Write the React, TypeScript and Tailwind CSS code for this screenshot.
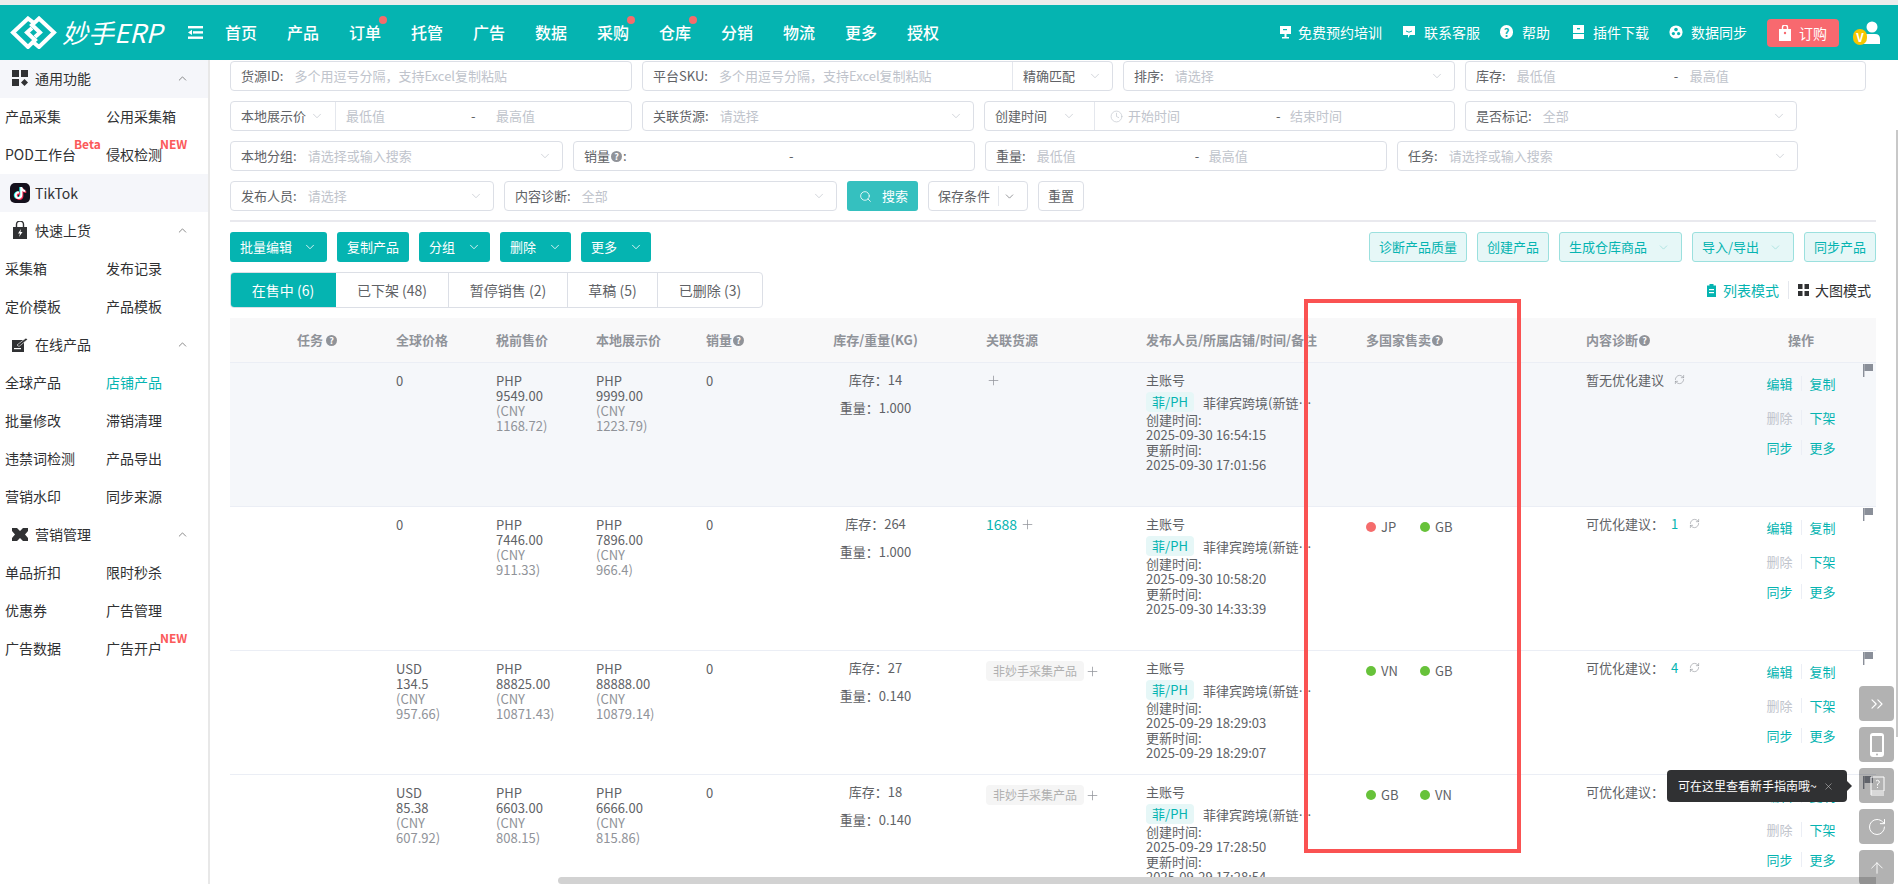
import React from "react";
import { ChevronDown, ChevronUp, Search, Clock, Plus, RefreshCw, X, ChevronsRight, RotateCw, ArrowUp } from "lucide-react";
import { FaTiktok } from "react-icons/fa6";

const GRID = "grid grid-cols-[156px_100px_100px_110px_99px_161px_180px_220px_220px_170px_110px_20px]";
const HINT = "多个用逗号分隔\uFF0C支持Excel复制粘贴";

function Help() {
  return <span className="inline-flex w-[11px] h-[11px] rounded-full bg-[#909399] text-white text-[9px] leading-none items-center justify-center font-bold shrink-0">?</span>;
}

function Logo() {
  return (
    <svg width="47" height="33" viewBox="0 0 47 33" fill="none" stroke="white" strokeWidth="4" className="shrink-0">
      <path d="M24 7 L18 2.5 L3 16.5 L18 31 L25 24 L17 16.5 L22 12" />
      <path d="M23 26 L29 31 L44 16.5 L29 2.5 L22 9 L30 16.5 L25 21" />
    </svg>
  );
}

function MenuIcon() {
  return (
    <svg width="15" height="13" viewBox="0 0 15 13" fill="white" className="shrink-0">
      <rect x="0" y="0" width="15" height="2.4" />
      <rect x="5" y="5.2" width="10" height="2.4" />
      <rect x="0" y="10.5" width="15" height="2.4" />
      <path d="M0 6.4 L4 3.8 V9 Z" />
    </svg>
  );
}

function NavItem({ label, dot }: { label: string; dot?: boolean }) {
  return (
    <span className="relative w-[32px] text-[16px] leading-[22px] font-medium text-white whitespace-nowrap">
      {label}
      {dot && <span className="absolute right-[-6px] top-[-5px] w-[8px] h-[8px] rounded-full bg-[#f56c6c]" />}
    </span>
  );
}

function HeadIcon({ kind }: { kind: string }) {
  if (kind === "screen")
    return <svg width="13" height="14" viewBox="0 0 13 14" fill="white" className="shrink-0"><path d="M1 1h11v8H1z" /><path d="M5.5 9h2v3h-2zM3 12h7v1.4H3z" /><rect x="4" y="4" width="4" height="1.2" fill="#05b4b1" /></svg>;
  if (kind === "chat")
    return <svg width="14" height="14" viewBox="0 0 14 14" fill="white" className="shrink-0"><path d="M1 1h12v9H8l-2 3v-3H1z" /><path d="M4 6q3 2.4 6 0" stroke="#05b4b1" fill="none" /></svg>;
  if (kind === "help")
    return <span className="w-[13px] h-[14px] rounded-full bg-white text-[#05b4b1] text-[11px] leading-[14px] font-bold text-center shrink-0">?</span>;
  if (kind === "plug")
    return <svg width="13" height="14" viewBox="0 0 13 14" fill="white" className="shrink-0"><rect x="1" y="0" width="11" height="14" /><rect x="1" y="8" width="11" height="1" fill="#05b4b1" /><rect x="5" y="3" width="3" height="1.4" fill="#05b4b1" /></svg>;
  return <svg width="14" height="14" viewBox="0 0 14 14" fill="white" className="shrink-0"><circle cx="7" cy="7" r="6.6" /><circle cx="7" cy="4.5" r="1.8" fill="#05b4b1" /><circle cx="4.4" cy="8.6" r="1.6" fill="#05b4b1" /><circle cx="9.6" cy="8.6" r="1.6" fill="#05b4b1" /></svg>;
}

function Header() {
  const R = "flex items-center pb-[2px]";
  return (
    <header className="h-[55px] shrink-0 bg-[#05b4b1] flex items-center text-white">
      <div className="flex items-center w-[188px] pl-[10px] gap-[5px] pb-[1px]">
        <Logo />
        <span className="text-[26px] leading-[30px] italic whitespace-nowrap">妙手ERP</span>
      </div>
      <MenuIcon />
      <nav className="flex items-center gap-[30px] ml-[22px] pb-[2px]">
        <NavItem label="首页" />
        <NavItem label="产品" />
        <NavItem label="订单" dot />
        <NavItem label="托管" />
        <NavItem label="广告" />
        <NavItem label="数据" />
        <NavItem label="采购" dot />
        <NavItem label="仓库" dot />
        <NavItem label="分销" />
        <NavItem label="物流" />
        <NavItem label="更多" />
        <NavItem label="授权" />
      </nav>
      <div className="ml-auto flex items-center text-[14px] leading-[20px] pr-[17px]">
        <span className={R + " gap-[6px] mr-[20px]"}><HeadIcon kind="screen" />免费预约培训</span>
        <span className={R + " gap-[8px] mr-[20px]"}><HeadIcon kind="chat" />联系客服</span>
        <span className={R + " gap-[9px] mr-[22px]"}><HeadIcon kind="help" />帮助</span>
        <span className={R + " gap-[8px] mr-[20px]"}><HeadIcon kind="plug" />插件下载</span>
        <span className={R + " gap-[8px] mr-[20px]"}><HeadIcon kind="sync" />数据同步</span>
        <span className="w-[72px] h-[28px] bg-[#f8696f] rounded-[4px] flex items-center justify-center gap-[8px] mr-[14px]">
          <svg width="12" height="16" viewBox="0 0 12 16" fill="white"><path d="M0 4h12v12H0z" /><path d="M3.5 4V2.5a2.5 2.5 0 0 1 5 0V4" stroke="white" fill="none" strokeWidth="1.4" /><circle cx="6" cy="8" r="1.2" fill="#f8696f" /></svg>
          订购
        </span>
        <span className="relative w-[28px] h-[24px] shrink-0">
          <svg width="20" height="24" viewBox="0 0 20 24" fill="white" className="absolute right-0 top-0"><circle cx="11" cy="6" r="5.5" /><path d="M2 23v-5q0-5 5-5h7q5 0 5 5v5z" /></svg>
          <span className="absolute left-0 top-[8px] w-[14px] h-[16px] rounded-full bg-[#f7c600] text-white text-[12px] font-bold leading-[16px] text-center">V</span>
        </span>
      </div>
    </header>
  );
}

function SecIcon({ kind }: { kind: string }) {
  if (kind === "grid")
    return <svg width="16" height="16" viewBox="0 0 16 16" fill="#303133" className="shrink-0"><rect width="7" height="7" /><rect x="9" width="7" height="7" /><rect y="9" width="7" height="7" /><path d="M12.5 9 L16 12.5 L12.5 16 L9 12.5Z" /></svg>;
  if (kind === "bag")
    return <svg width="14" height="18" viewBox="0 0 14 18" className="shrink-0"><path d="M0 6h14v12H0z" fill="#303133" /><path d="M3.5 6V3.5a3.5 3.5 0 0 1 7 0V6" stroke="#303133" fill="none" strokeWidth="1.4" /><path d="M8 8 L5 12.5 H7 L6 16 L9.5 11 H7.5Z" fill="white" /></svg>;
  if (kind === "edit")
    return <svg width="16" height="15" viewBox="0 0 16 15" className="shrink-0"><path d="M0 3h12v12H0z" fill="#303133" /><path d="M5 8 L14 1 L15.5 2.5 L7 9.5Z" fill="#303133" stroke="white" strokeWidth=".6" /><rect x="2" y="11" width="7" height="1.2" fill="white" /></svg>;
  return <svg width="16" height="13" viewBox="0 0 16 13" fill="#303133" className="shrink-0"><path d="M0 0h5l3 3 3-3h5v3l-3 3.5 3 3.5v3h-5l-3-3-3 3H0v-3l3-3.5L0 3z" /></svg>;
}

function SecHead({ kind, label, active }: { kind: string; label: string; active?: boolean }) {
  return (
    <div className={active ? "h-[38px] flex items-center bg-[#f5f6fa] pb-[2px]" : "h-[38px] flex items-center pb-[2px]"}>
      <span className="w-[35px] flex justify-center pl-[5px]"><SecIcon kind={kind} /></span>
      <span className="text-[14px] text-[#303133]">{label}</span>
      <ChevronUp size={13} strokeWidth={1.4} className="ml-auto mr-[19px] text-[#666]" />
    </div>
  );
}

function SideGrid({ items }: { items: [React.ReactNode, React.ReactNode][] }) {
  return (
    <>
      {items.map((r, i) => (
        <div key={i} className="h-[38px] pb-[2px] grid grid-cols-[106px_1fr] items-center text-[14px] text-[#303133]">
          <span className="pl-[5px] whitespace-nowrap">{r[0]}</span>
          <span className="whitespace-nowrap">{r[1]}</span>
        </div>
      ))}
    </>
  );
}

function Badge({ text }: { text: string }) {
  return <span className="absolute left-full top-[-6px] ml-[-2px] text-[12px] leading-[12px] font-bold text-[#fb5a5a] whitespace-nowrap">{text}</span>;
}

function Sidebar() {
  return (
    <aside className="w-[210px] shrink-0 border-r-2 border-[#e8e8e8] bg-white h-full overflow-hidden">
      <SecHead kind="grid" label="通用功能" active />
      <SideGrid items={[
        ["产品采集", "公用采集箱"],
        [<span className="relative">POD工作台<Badge text="Beta" /></span>, <span className="relative">侵权检测<Badge text="NEW" /></span>],
      ]} />
      <div className="h-[38px] flex items-center bg-[#f5f6fa] text-[14px] text-[#303133]">
        <span className="relative w-[20px] h-[20px] ml-[10px] mr-[5px] rounded-[5px] bg-[#14101c] flex items-center justify-center shrink-0">
          <FaTiktok size={12} className="absolute text-[#25f4ee] left-[3px] top-[4px]" />
          <FaTiktok size={12} className="absolute text-[#fe2c55] left-[5px] top-[5px]" />
          <FaTiktok size={12} className="absolute text-white left-[4px] top-[4px]" />
        </span>
        TikTok
      </div>
      <SecHead kind="bag" label="快速上货" />
      <SideGrid items={[["采集箱", "发布记录"], ["定价模板", "产品模板"]]} />
      <SecHead kind="edit" label="在线产品" />
      <SideGrid items={[
        ["全球产品", <span className="text-[#05b4b1]">店铺产品</span>],
        ["批量修改", "滞销清理"],
        ["违禁词检测", "产品导出"],
        ["营销水印", "同步来源"],
      ]} />
      <SecHead kind="ticket" label="营销管理" />
      <SideGrid items={[
        ["单品折扣", "限时秒杀"],
        ["优惠券", "广告管理"],
        ["广告数据", <span className="relative">广告开户<Badge text="NEW" /></span>],
      ]} />
    </aside>
  );
}

const BOX = "h-[30px] shrink-0 border border-[#dcdfe6] rounded-[4px] bg-white flex items-center text-[13px] text-[#606266] whitespace-nowrap";
const PH = "text-[#c0c4cc]";
const CHEV = "ml-auto mr-[10px] text-[#c0c4cc] shrink-0";

function Filters() {
  return (
    <div className="pt-[1px] flex flex-col gap-[10px]">
      <div className="flex gap-[10px]">
        <div className={BOX + " w-[402px] pl-[10px]"}>货源ID:<span className={PH + " ml-[11px]"}>{HINT}</span></div>
        <div className={BOX + " w-[471px] pl-[10px]"}>
          平台SKU:<span className={PH + " ml-[11px]"}>{HINT}</span>
          <span className="ml-auto h-full w-[100px] border-l border-[#e4e7ed] flex items-center pl-[10px]">精确匹配<ChevronDown size={14} strokeWidth={1.2} className={CHEV} /></span>
        </div>
        <div className={BOX + " w-[332px] pl-[10px]"}>排序:<span className={PH + " ml-[11px]"}>请选择</span><ChevronDown size={14} strokeWidth={1.2} className={CHEV} /></div>
        <div className={BOX + " w-[401px] pl-[10px]"}>库存:<span className={PH + " ml-[11px] w-[157px]"}>最低值</span><span className="w-[16px]">-</span><span className={PH}>最高值</span></div>
      </div>
      <div className="flex gap-[10px]">
        <div className={BOX + " w-[402px]"}>
          <span className="h-full w-[105px] border-r border-[#e4e7ed] flex items-center pl-[10px]">本地展示价<ChevronDown size={14} strokeWidth={1.2} className="ml-[4px] text-[#c0c4cc]" /></span>
          <span className={PH + " ml-[10px] w-[125px]"}>最低值</span><span className="w-[25px]">-</span><span className={PH}>最高值</span>
        </div>
        <div className={BOX + " w-[332px] pl-[10px]"}>关联货源:<span className={PH + " ml-[11px]"}>请选择</span><ChevronDown size={14} strokeWidth={1.2} className={CHEV} /></div>
        <div className={BOX + " w-[471px]"}>
          <span className="h-full w-[110px] border-r border-[#e4e7ed] flex items-center pl-[10px]">创建时间<ChevronDown size={14} strokeWidth={1.2} className="ml-[15px] text-[#c0c4cc]" /></span>
          <Clock size={13} strokeWidth={1.2} className="ml-[15px] mr-[5px] text-[#c0c4cc] shrink-0" />
          <span className={PH + " w-[148px]"}>开始时间</span><span className="w-[14px]">-</span><span className={PH}>结束时间</span>
        </div>
        <div className={BOX + " w-[332px] pl-[10px]"}>是否标记:<span className={PH + " ml-[11px]"}>全部</span><ChevronDown size={14} strokeWidth={1.2} className={CHEV} /></div>
      </div>
      <div className="flex gap-[10px]">
        <div className={BOX + " w-[333px] pl-[10px]"}>本地分组:<span className={PH + " ml-[11px]"}>请选择或输入搜索</span><ChevronDown size={14} strokeWidth={1.2} className={CHEV} /></div>
        <div className={BOX + " w-[402px] pl-[10px]"}><span className="flex items-center gap-[1px] w-[205px]">销量<Help />:</span>-</div>
        <div className={BOX + " w-[402px] pl-[10px]"}>重量:<span className={PH + " ml-[11px] w-[158px]"}>最低值</span><span className="w-[14px]">-</span><span className={PH}>最高值</span></div>
        <div className={BOX + " w-[401px] pl-[10px]"}>任务:<span className={PH + " ml-[11px]"}>请选择或输入搜索</span><ChevronDown size={14} strokeWidth={1.2} className={CHEV} /></div>
      </div>
      <div className="flex gap-[10px]">
        <div className={BOX + " w-[264px] pl-[10px]"}>发布人员:<span className={PH + " ml-[11px]"}>请选择</span><ChevronDown size={14} strokeWidth={1.2} className={CHEV} /></div>
        <div className={BOX + " w-[333px] pl-[10px]"}>内容诊断:<span className={PH + " ml-[11px]"}>全部</span><ChevronDown size={14} strokeWidth={1.2} className={CHEV} /></div>
        <div className="h-[30px] w-[71px] shrink-0 bg-[#35c0bf] rounded-[3px] text-white text-[13px] flex items-center justify-center gap-[10px] pl-[2px]"><Search size={13} strokeWidth={1.5} />搜索</div>
        <div className={BOX + " w-[100px] pl-[9px]"}>
          保存条件
          <span className="ml-[8px] h-[20px] w-[1px] bg-[#e4e7ed]" />
          <ChevronDown size={13} strokeWidth={1.2} className="ml-[4px] text-[#606266]" />
        </div>
        <div className={BOX + " w-[46px] justify-center"}>重置</div>
      </div>
    </div>
  );
}

const SOLID = "h-[30px] rounded-[3px] bg-[#05b4b1] text-white text-[13px] flex items-center shrink-0 whitespace-nowrap";
const LIGHT = "h-[30px] rounded-[3px] bg-[#e6f7f7] border border-[#9be0de] text-[#05b4b1] text-[13px] flex items-center shrink-0 whitespace-nowrap";

function Actions() {
  return (
    <div className="mt-[10px] flex items-center">
      <div className={SOLID + " w-[97px] pl-[10px]"}>批量编辑<ChevronDown size={14} strokeWidth={1.4} className="ml-[11px]" /></div>
      <div className={SOLID + " w-[72px] justify-center ml-[10px]"}>复制产品</div>
      <div className={SOLID + " w-[71px] pl-[10px] ml-[10px]"}>分组<ChevronDown size={14} strokeWidth={1.4} className="ml-[12px]" /></div>
      <div className={SOLID + " w-[71px] pl-[10px] ml-[10px]"}>删除<ChevronDown size={14} strokeWidth={1.4} className="ml-[12px]" /></div>
      <div className={SOLID + " w-[70px] pl-[10px] ml-[10px]"}>更多<ChevronDown size={14} strokeWidth={1.4} className="ml-[12px]" /></div>
      <div className="ml-auto flex gap-[10px]">
        <div className={LIGHT + " w-[98px] justify-center"}>诊断产品质量</div>
        <div className={LIGHT + " w-[72px] justify-center"}>创建产品</div>
        <div className={LIGHT + " w-[123px] pl-[9px]"}>生成仓库商品<ChevronDown size={13} strokeWidth={1.2} className="ml-[10px] text-[#8fd8d6]" /></div>
        <div className={LIGHT + " w-[102px] pl-[9px]"}>导入/导出<ChevronDown size={13} strokeWidth={1.2} className="ml-[10px] text-[#8fd8d6]" /></div>
        <div className={LIGHT + " w-[72px] justify-center"}>同步产品</div>
      </div>
    </div>
  );
}

const TAB = "h-full flex items-center justify-center border-r border-[#dcdfe6]";

function Tabs() {
  return (
    <div className="mt-[10px] flex items-center h-[36px]">
      <div className="w-[533px] h-full flex border border-[#dcdfe6] rounded-[4px] text-[14px] text-[#606266] overflow-hidden whitespace-nowrap">
        <div className="w-[106px] h-full bg-[#05b4b1] text-white flex items-center justify-center ml-[-1px]">在售中 (6)</div>
        <div className={TAB + " w-[113px]"}>已下架 (48)</div>
        <div className={TAB + " w-[119px]"}>暂停销售 (2)</div>
        <div className={TAB + " w-[90px]"}>草稿 (5)</div>
        <div className="flex-1 flex items-center justify-center">已删除 (3)</div>
      </div>
      <div className="ml-auto mr-[5px] flex items-center text-[14px] whitespace-nowrap">
        <svg width="9" height="13" viewBox="0 0 9 13" className="mr-[7px]"><path d="M0 1.5h9V13H0z" fill="#05b4b1" /><rect x="2.5" y="0" width="4" height="2" fill="#05b4b1" /><rect x="2" y="5" width="5" height="1.2" fill="white" /><rect x="2" y="8" width="5" height="1.2" fill="white" /></svg>
        <span className="text-[#05b4b1]">列表模式</span>
        <span className="w-[1px] h-[18px] bg-[#e4e7ed] mx-[9px]" />
        <svg width="11" height="12" viewBox="0 0 11 12" fill="#303133" className="mr-[6px]"><rect width="4.5" height="5" /><rect x="6.5" width="4.5" height="5" /><rect y="7" width="4.5" height="5" /><rect x="6.5" y="7" width="4.5" height="5" /></svg>
        <span className="text-[#303133]">大图模式</span>
      </div>
    </div>
  );
}

function TableHead() {
  const H = "flex items-center gap-[1px] whitespace-nowrap pl-[10px]";
  return (
    <div className={GRID + " h-[45px] bg-[#f8f8f9] border-b border-[#ebeef5] text-[13px] font-semibold text-[#909399] items-center"}>
      <div className="flex items-center justify-center gap-[3px] pl-[18px]">任务<Help /></div>
      <div className={H}>全球价格</div>
      <div className={H}>税前售价</div>
      <div className={H}>本地展示价</div>
      <div className={H}>销量<Help /></div>
      <div className="text-center">库存/重量(KG)</div>
      <div className="pl-[30px] whitespace-nowrap">关联货源</div>
      <div className={H}>发布人员/所属店铺/时间/备注</div>
      <div className={H}>多国家售卖<Help /></div>
      <div className={H}>内容诊断<Help /></div>
      <div className="text-center">操作</div>
      <div />
    </div>
  );
}

function Price({ a, b, c, d }: { a: string; b: string; c: string; d: string }) {
  return (
    <div className="pl-[10px] pt-[10px] text-[13px] leading-[15px] text-[#606266]">
      <div>{a}</div>
      <div>{b}</div>
      <div className="text-[#909399]">{c}</div>
      <div className="text-[#909399]">{d}</div>
    </div>
  );
}

function Op({ a, b, dim }: { a: string; b: string; dim?: boolean }) {
  return (
    <div className="flex items-center justify-center gap-[8px] h-[15px] text-[13px] leading-[15px] text-[#05b4b1]">
      <span className={dim ? "text-[#c0c4cc]" : ""}>{a}</span>
      <span className="w-[1px] h-[15px] bg-[#ebeef5]" />
      <span>{b}</span>
    </div>
  );
}

function Dot({ c, t }: { c: string; t: string }) {
  return (
    <span className="w-[54px] flex items-center gap-[5px] text-[13px] leading-[15px] text-[#606266]">
      <span className={c === "red" ? "w-[10px] h-[10px] rounded-full bg-[#f56c6c]" : "w-[10px] h-[10px] rounded-full bg-[#67c23a]"} />
      {t}
    </span>
  );
}

type RowD = {
  cls: string;
  g: [string, string, string, string];
  t: [string, string, string, string];
  l: [string, string, string, string];
  stock: string;
  weight: string;
  link: React.ReactNode;
  created: string;
  updated: string;
  market: React.ReactNode;
  diag: React.ReactNode;
};

function Row({ d }: { d: RowD }) {
  return (
    <div className={GRID + " " + d.cls + " border-b border-[#ebeef5] text-[13px] leading-[15px] text-[#606266]"}>
      <div />
      <div className="pl-[10px] pt-[10px]">
        <div>{d.g[0]}</div>
        <div>{d.g[1]}</div>
        <div className="text-[#909399]">{d.g[2]}</div>
        <div className="text-[#909399]">{d.g[3]}</div>
      </div>
      <Price a={d.t[0]} b={d.t[1]} c={d.t[2]} d={d.t[3]} />
      <Price a={d.l[0]} b={d.l[1]} c={d.l[2]} d={d.l[3]} />
      <div className="pl-[10px] pt-[10px]">0</div>
      <div className="pt-[9px] flex flex-col items-center gap-[13px]">
        <div>{"库存\uFF1A" + d.stock}</div>
        <div>{"重量\uFF1A" + d.weight}</div>
      </div>
      <div className="pl-[30px] pt-[10px]">{d.link}</div>
      <div className="pl-[10px] pt-[9px]">
        <div>主账号</div>
        <div className="flex items-center h-[20px] mt-[5px]">
          <span className="w-[48px] h-[20px] bg-[#e6f7f7] text-[#05b4b1] text-[13px] leading-[20px] text-center rounded-[4px] shrink-0">菲/PH</span>
          <span className="ml-[9px] w-[109px] truncate">菲律宾跨境(新链接)店铺</span>
        </div>
        <div>创建时间:</div>
        <div>{d.created}</div>
        <div>更新时间:</div>
        <div>{d.updated}</div>
      </div>
      <div className="pl-[10px] pt-[12px] flex items-start h-fit">{d.market}</div>
      <div className="pl-[10px] pt-[9px] flex items-center h-fit whitespace-nowrap">{d.diag}</div>
      <div className="pt-[13px] flex flex-col">
        <Op a="编辑" b="复制" />
        <div className="mt-[19px]"><Op a="删除" b="下架" dim /></div>
        <div className="mt-[15px]"><Op a="同步" b="更多" /></div>
      </div>
      <div className="pl-[7px] pt-[1px]">
        <svg width="10" height="13" viewBox="0 0 10 13" fill="#8a8f99"><rect width="1.4" height="13" /><path d="M1.4 0H10V7H1.4z" /></svg>
      </div>
    </div>
  );
}

function Tag() {
  return (
    <span className="flex items-center gap-[1px]">
      <span className="w-[98px] h-[20px] bg-[#f5f5f5] rounded-[4px] text-[12px] leading-[20px] text-[#b0b0b0] text-center whitespace-nowrap">非妙手采集产品</span>
      <Plus size={15} strokeWidth={1.2} className="text-[#909399]" />
    </span>
  );
}

function Diag({ n }: { n: string }) {
  return (
    <>
      {"可优化建议\uFF1A"}<span className="text-[#05b4b1] ml-[7px] w-[12px]">{n}</span>
      <RefreshCw size={11} strokeWidth={1.3} className="ml-[6px] text-[#909399]" />
    </>
  );
}

const rows: RowD[] = [
  {
    cls: "h-[144px] bg-[#f5f7fa]",
    g: ["0", "", "", ""],
    t: ["PHP", "9549.00", "(CNY", "1168.72)"],
    l: ["PHP", "9999.00", "(CNY", "1223.79)"],
    stock: "14", weight: "1.000",
    link: <Plus size={15} strokeWidth={1.2} className="text-[#909399]" />,
    created: "2025-09-30 16:54:15", updated: "2025-09-30 17:01:56",
    market: null,
    diag: <>暂无优化建议<RefreshCw size={11} strokeWidth={1.3} className="ml-[10px] text-[#909399]" /></>,
  },
  {
    cls: "h-[144px] bg-white",
    g: ["0", "", "", ""],
    t: ["PHP", "7446.00", "(CNY", "911.33)"],
    l: ["PHP", "7896.00", "(CNY", "966.4)"],
    stock: "264", weight: "1.000",
    link: <span className="flex items-center gap-[3px] text-[#05b4b1] text-[14px]">1688<Plus size={15} strokeWidth={1.2} className="text-[#909399]" /></span>,
    created: "2025-09-30 10:58:20", updated: "2025-09-30 14:33:39",
    market: <><Dot c="red" t="JP" /><Dot c="green" t="GB" /></>,
    diag: <Diag n="1" />,
  },
  {
    cls: "h-[124px] bg-white",
    g: ["USD", "134.5", "(CNY", "957.66)"],
    t: ["PHP", "88825.00", "(CNY", "10871.43)"],
    l: ["PHP", "88888.00", "(CNY", "10879.14)"],
    stock: "27", weight: "0.140",
    link: <Tag />,
    created: "2025-09-29 18:29:03", updated: "2025-09-29 18:29:07",
    market: <><Dot c="green" t="VN" /><Dot c="green" t="GB" /></>,
    diag: <Diag n="4" />,
  },
  {
    cls: "h-[144px] bg-white",
    g: ["USD", "85.38", "(CNY", "607.92)"],
    t: ["PHP", "6603.00", "(CNY", "808.15)"],
    l: ["PHP", "6666.00", "(CNY", "815.86)"],
    stock: "18", weight: "0.140",
    link: <Tag />,
    created: "2025-09-29 17:28:50", updated: "2025-09-29 17:28:54",
    market: <><Dot c="green" t="GB" /><Dot c="green" t="VN" /></>,
    diag: <Diag n="2" />,
  },
];

const FLOAT = "w-[35px] h-[35px] rounded-[4px] bg-black/30 flex items-center justify-center text-white";

function Floats() {
  return (
    <>
      <div className="absolute left-[1859px] top-[686px] flex flex-col gap-[6px] z-20">
        <div className={FLOAT}><ChevronsRight size={20} strokeWidth={1.4} /></div>
        <div className={FLOAT}>
          <svg width="14" height="24" viewBox="0 0 14 24"><rect width="14" height="24" rx="3" fill="white" /><rect x="2" y="3" width="10" height="16" fill="#b2b2b2" /><circle cx="7" cy="21.5" r="1" fill="#b2b2b2" /></svg>
        </div>
        <div className={FLOAT}>
          <svg width="16" height="20" viewBox="0 0 16 20" fill="none" stroke="white" strokeWidth="1"><path d="M2 1h13v14H2zM2 15v4h13M2 17h13" /><path d="M7 5q1.5-1.5 3 0t-1.5 3v1.5M8.5 11v1" /></svg>
        </div>
        <div className={FLOAT}><RotateCw size={20} strokeWidth={1.2} /></div>
        <div className={FLOAT}><ArrowUp size={18} strokeWidth={1.2} /></div>
      </div>
      <div className="absolute left-[1667px] top-[770px] w-[180px] h-[32px] rounded-[4px] bg-[#303133] flex items-center pl-[11px] text-[12px] text-white whitespace-nowrap z-20">
        可在这里查看新手指南哦~
        <X size={11} strokeWidth={1.2} className="ml-[6px] text-[#c8c8c8]" />
        <span className="absolute left-full top-[11px] w-0 h-0 border-y-[5px] border-y-transparent border-l-[5px] border-l-[#303133]" />
      </div>
    </>
  );
}

export default function App() {
  return (
    <div className="relative w-[1898px] h-[884px] overflow-hidden flex flex-col bg-white [font-family:'Noto_Sans_CJK_SC','Noto_Sans',sans-serif]">
      <div className="h-[5px] shrink-0 bg-[#ececec]" />
      <Header />
      <div className="flex flex-1 min-h-0">
        <Sidebar />
        <main className="flex-1 min-w-0 flex flex-col">
          <div className="flex-1 min-h-0 overflow-hidden pl-[20px] pr-[22px]">
            <Filters />
            <div className="mt-[9px] border-t-2 border-[#e9e9ee] h-0" />
            <Actions />
            <Tabs />
            <div className="mt-[10px]">
              <TableHead />
              {rows.map((r, i) => <Row key={i} d={r} />)}
            </div>
          </div>
          <div className="h-[7px] shrink-0 flex pl-[348px] pr-[22px]">
            <div className="flex-1 h-full rounded-l-[4px] bg-[#d2d2d2]" />
          </div>
        </main>
      </div>
      <div className="absolute left-[1304px] top-[299px] w-[217px] h-[554px] border-4 border-[#fa5252] z-10 pointer-events-none" />
      <div className="absolute left-[1896px] top-[130px] w-[2px] h-[607px] bg-[#c8c8c8]" />
      <Floats />
    </div>
  );
}
